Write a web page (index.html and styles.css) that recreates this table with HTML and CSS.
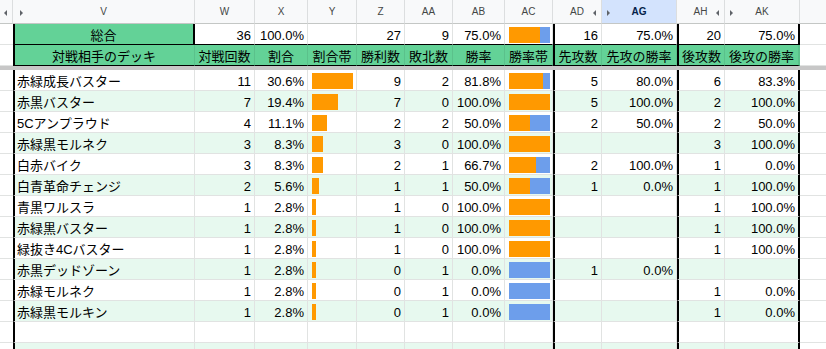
FILE: index.html
```html
<!DOCTYPE html>
<html lang="ja">
<head>
<meta charset="utf-8">
<title>対戦成績</title>
<link rel="stylesheet" href="styles.css">
</head>
<body>
<div class="sheet">
  <div class="row colhdr">
    <div class="ch corner"><span class="tri-l pos-corner"></span></div>
    <div class="ch">V<span class="tri-r pos-v"></span></div>
    <div class="ch">W</div>
    <div class="ch">X</div>
    <div class="ch">Y</div>
    <div class="ch">Z</div>
    <div class="ch">AA</div>
    <div class="ch">AB</div>
    <div class="ch">AC</div>
    <div class="ch">AD<span class="tri-l pos-ad"></span></div>
    <div class="ch sel"><span class="tri-r pos-ag"></span>AG</div>
    <div class="ch">AH<span class="tri-l pos-ah"></span></div>
    <div class="ch"><span class="tri-r pos-ak"></span>AK</div>
    <div class="ch last"></div>
  </div>

  <div class="row sum">
    <div class="c0"></div>
    <div class="v green ctr vr">総合</div>
    <div class="r">36</div>
    <div class="r">100.0%</div>
    <div></div>
    <div class="r">27</div>
    <div class="r">9</div>
    <div class="r">75.0%</div>
    <div class="spark"><div class="track"><span class="win" style="width:75%"></span><span class="loss"></span></div></div>
    <div class="r ad">16</div>
    <div class="r">75.0%</div>
    <div class="r ah">20</div>
    <div class="r ak">75.0%</div>
    <div class="x"></div>
  </div>

  <div class="row hdr">
    <div class="c0"></div>
    <div class="v ctr">対戦相手のデッキ</div>
    <div class="ctr">対戦回数</div>
    <div class="ctr">割合</div>
    <div class="ctr">割合帯</div>
    <div class="ctr">勝利数</div>
    <div class="ctr">敗北数</div>
    <div class="ctr">勝率</div>
    <div class="ctr">勝率帯</div>
    <div class="ctr ad">先攻数</div>
    <div class="ctr">先攻の勝率</div>
    <div class="ctr ah">後攻数</div>
    <div class="ctr ak">後攻の勝率</div>
    <div class="x"></div>
  </div>

  <div class="freeze"></div>

  <div class="row data">
    <div class="c0"></div>
    <div class="v">赤緑成長バスター</div>
    <div class="r">11</div><div class="r">30.6%</div>
    <div class="spark"><div class="track"><span class="share" style="width:100%"></span></div></div>
    <div class="r">9</div><div class="r">2</div><div class="r">81.8%</div>
    <div class="spark"><div class="track"><span class="win" style="width:81.8%"></span><span class="loss"></span></div></div>
    <div class="r ad">5</div><div class="r">80.0%</div>
    <div class="r ah">6</div><div class="r ak">83.3%</div>
    <div class="x"></div>
  </div>

  <div class="row data band">
    <div class="c0"></div>
    <div class="v">赤黒バスター</div>
    <div class="r">7</div><div class="r">19.4%</div>
    <div class="spark"><div class="track"><span class="share" style="width:63.6%"></span></div></div>
    <div class="r">7</div><div class="r">0</div><div class="r">100.0%</div>
    <div class="spark"><div class="track"><span class="win" style="width:100%"></span><span class="loss"></span></div></div>
    <div class="r ad">5</div><div class="r">100.0%</div>
    <div class="r ah">2</div><div class="r ak">100.0%</div>
    <div class="x"></div>
  </div>

  <div class="row data">
    <div class="c0"></div>
    <div class="v">5Cアンプラウド</div>
    <div class="r">4</div><div class="r">11.1%</div>
    <div class="spark"><div class="track"><span class="share" style="width:36.4%"></span></div></div>
    <div class="r">2</div><div class="r">2</div><div class="r">50.0%</div>
    <div class="spark"><div class="track"><span class="win" style="width:50%"></span><span class="loss"></span></div></div>
    <div class="r ad">2</div><div class="r">50.0%</div>
    <div class="r ah">2</div><div class="r ak">50.0%</div>
    <div class="x"></div>
  </div>

  <div class="row data band">
    <div class="c0"></div>
    <div class="v">赤緑黒モルネク</div>
    <div class="r">3</div><div class="r">8.3%</div>
    <div class="spark"><div class="track"><span class="share" style="width:27.3%"></span></div></div>
    <div class="r">3</div><div class="r">0</div><div class="r">100.0%</div>
    <div class="spark"><div class="track"><span class="win" style="width:100%"></span><span class="loss"></span></div></div>
    <div class="r ad"></div><div class="r"></div>
    <div class="r ah">3</div><div class="r ak">100.0%</div>
    <div class="x"></div>
  </div>

  <div class="row data">
    <div class="c0"></div>
    <div class="v">白赤バイク</div>
    <div class="r">3</div><div class="r">8.3%</div>
    <div class="spark"><div class="track"><span class="share" style="width:27.3%"></span></div></div>
    <div class="r">2</div><div class="r">1</div><div class="r">66.7%</div>
    <div class="spark"><div class="track"><span class="win" style="width:66.7%"></span><span class="loss"></span></div></div>
    <div class="r ad">2</div><div class="r">100.0%</div>
    <div class="r ah">1</div><div class="r ak">0.0%</div>
    <div class="x"></div>
  </div>

  <div class="row data band">
    <div class="c0"></div>
    <div class="v">白青革命チェンジ</div>
    <div class="r">2</div><div class="r">5.6%</div>
    <div class="spark"><div class="track"><span class="share" style="width:18.2%"></span></div></div>
    <div class="r">1</div><div class="r">1</div><div class="r">50.0%</div>
    <div class="spark"><div class="track"><span class="win" style="width:50%"></span><span class="loss"></span></div></div>
    <div class="r ad">1</div><div class="r">0.0%</div>
    <div class="r ah">1</div><div class="r ak">100.0%</div>
    <div class="x"></div>
  </div>

  <div class="row data">
    <div class="c0"></div>
    <div class="v">青黒ワルスラ</div>
    <div class="r">1</div><div class="r">2.8%</div>
    <div class="spark"><div class="track"><span class="share" style="width:9.1%"></span></div></div>
    <div class="r">1</div><div class="r">0</div><div class="r">100.0%</div>
    <div class="spark"><div class="track"><span class="win" style="width:100%"></span><span class="loss"></span></div></div>
    <div class="r ad"></div><div class="r"></div>
    <div class="r ah">1</div><div class="r ak">100.0%</div>
    <div class="x"></div>
  </div>

  <div class="row data band">
    <div class="c0"></div>
    <div class="v">赤緑黒バスター</div>
    <div class="r">1</div><div class="r">2.8%</div>
    <div class="spark"><div class="track"><span class="share" style="width:9.1%"></span></div></div>
    <div class="r">1</div><div class="r">0</div><div class="r">100.0%</div>
    <div class="spark"><div class="track"><span class="win" style="width:100%"></span><span class="loss"></span></div></div>
    <div class="r ad"></div><div class="r"></div>
    <div class="r ah">1</div><div class="r ak">100.0%</div>
    <div class="x"></div>
  </div>

  <div class="row data">
    <div class="c0"></div>
    <div class="v">緑抜き4Cバスター</div>
    <div class="r">1</div><div class="r">2.8%</div>
    <div class="spark"><div class="track"><span class="share" style="width:9.1%"></span></div></div>
    <div class="r">1</div><div class="r">0</div><div class="r">100.0%</div>
    <div class="spark"><div class="track"><span class="win" style="width:100%"></span><span class="loss"></span></div></div>
    <div class="r ad"></div><div class="r"></div>
    <div class="r ah">1</div><div class="r ak">100.0%</div>
    <div class="x"></div>
  </div>

  <div class="row data band">
    <div class="c0"></div>
    <div class="v">赤黒デッドゾーン</div>
    <div class="r">1</div><div class="r">2.8%</div>
    <div class="spark"><div class="track"><span class="share" style="width:9.1%"></span></div></div>
    <div class="r">0</div><div class="r">1</div><div class="r">0.0%</div>
    <div class="spark"><div class="track"><span class="win" style="width:0%"></span><span class="loss"></span></div></div>
    <div class="r ad">1</div><div class="r">0.0%</div>
    <div class="r ah"></div><div class="r ak"></div>
    <div class="x"></div>
  </div>

  <div class="row data">
    <div class="c0"></div>
    <div class="v">赤緑モルネク</div>
    <div class="r">1</div><div class="r">2.8%</div>
    <div class="spark"><div class="track"><span class="share" style="width:9.1%"></span></div></div>
    <div class="r">0</div><div class="r">1</div><div class="r">0.0%</div>
    <div class="spark"><div class="track"><span class="win" style="width:0%"></span><span class="loss"></span></div></div>
    <div class="r ad"></div><div class="r"></div>
    <div class="r ah">1</div><div class="r ak">0.0%</div>
    <div class="x"></div>
  </div>

  <div class="row data band">
    <div class="c0"></div>
    <div class="v">赤緑黒モルキン</div>
    <div class="r">1</div><div class="r">2.8%</div>
    <div class="spark"><div class="track"><span class="share" style="width:9.1%"></span></div></div>
    <div class="r">0</div><div class="r">1</div><div class="r">0.0%</div>
    <div class="spark"><div class="track"><span class="win" style="width:0%"></span><span class="loss"></span></div></div>
    <div class="r ad"></div><div class="r"></div>
    <div class="r ah">1</div><div class="r ak">0.0%</div>
    <div class="x"></div>
  </div>

  <div class="row data">
    <div class="c0"></div><div class="v"></div>
    <div></div><div></div><div></div><div></div><div></div><div></div><div></div>
    <div class="ad"></div><div></div><div class="ah"></div><div class="ak"></div>
    <div class="x"></div>
  </div>

  <div class="row data band">
    <div class="c0"></div><div class="v"></div>
    <div></div><div></div><div></div><div></div><div></div><div></div><div></div>
    <div class="ad"></div><div></div><div class="ah"></div><div class="ak"></div>
    <div class="x"></div>
  </div>
</div>
</body>
</html>
```

FILE: styles.css
```css
html, body {
  margin: 0;
  padding: 0;
}

body {
  width: 826px;
  height: 349px;
  overflow: hidden;
  background: #ffffff;
  font-family: "Liberation Sans", "Noto Sans CJK JP", sans-serif;
  font-size: 13px;
  color: #000000;
}

.sheet {
  display: flex;
  flex-direction: column;
}

.row {
  display: grid;
  grid-template-columns: 13px 182px 60px 53px 49px 48px 48px 52px 48px 49px 75px 48px 75px 1fr;
  height: 21px;
  flex: none;
}

.row > div {
  box-sizing: border-box;
  border-right: 1px solid #e1e3e2;
  border-bottom: 1px solid #e1e3e2;
  padding: 3px 3px 0;
  line-height: 17px;
  white-space: nowrap;
  overflow: hidden;
}

.r { text-align: right; }
.ctr { text-align: center; }

.row > .c0 {
  border-right: none;
  background: #ffffff;
}

.row > .x {
  border-right: none;
  background: #ffffff;
}

.row > .v {
  border-left: 2px solid #000000;
  padding-left: 2px;
}

.row > .ad { border-left: 2px solid #000000; }
.row > .ah { border-left: 2px solid #000000; }
.row > .ak { border-right: 2px solid #000000; }

/* column letters */
.colhdr {
  height: 24px;
}

.colhdr > .ch {
  position: relative;
  padding: 0;
  background: #f8f9fa;
  border-right: 1px solid #dcdedf;
  border-bottom: 1px solid #c4c7c5;
  font-size: 10px;
  line-height: 23px;
  color: #444746;
  text-align: center;
  overflow: visible;
}

.colhdr > .ch.sel {
  background: #d3e3fd;
  color: #041e49;
  font-weight: bold;
}

.colhdr > .ch.last {
  border-right: none;
}

.tri-l,
.tri-r {
  position: absolute;
  top: 10px;
  width: 0;
  height: 0;
  border-top: 3px solid transparent;
  border-bottom: 3px solid transparent;
}

.tri-l { border-right: 3px solid #5f6368; }
.tri-r { border-left: 3px solid #5f6368; }

.pos-corner { left: 4px; }
.pos-v { left: 7px; }
.pos-ad { left: 40px; }
.pos-ag { left: 5px; }
.pos-ah { left: 39px; }
.pos-ak { left: 5px; }

/* summary row */
.sum > div:not(.c0):not(.x) {
  border-bottom-color: #000000;
}

.sum > .green {
  background: #63d297;
}

.sum > .vr {
  border-right: 2px solid #000000;
}

/* header row */
.hdr > div:not(.c0):not(.x) {
  background: #63d297;
  border-right-color: rgba(0, 0, 0, 0.08);
  border-bottom-color: #000000;
}

.hdr > .ak {
  border-right-color: #000000;
}

.freeze {
  height: 4px;
  background: #c7c7c7;
  flex: none;
}

/* banding */
.band > div:not(.c0):not(.x) {
  background: #e7f9ef;
}

/* sparklines */
.row > .spark {
  padding: 3px 0 0 4px;
}

.track {
  display: flex;
  width: 41px;
  height: 16px;
}

.share {
  display: block;
  height: 16px;
  background: #ff9900;
}

.win {
  display: block;
  height: 16px;
  background: #ff9900;
  flex: none;
}

.loss {
  display: block;
  height: 16px;
  flex: 1;
  background: #6d9eeb;
}
```
